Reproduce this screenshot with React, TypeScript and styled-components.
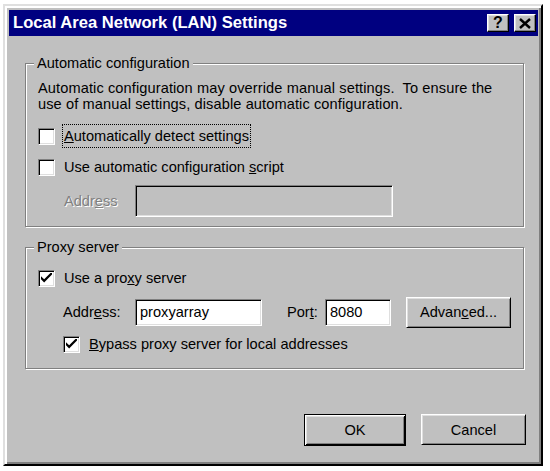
import React from 'react'
import styled, { createGlobalStyle } from 'styled-components'

const Global = createGlobalStyle`
  html, body {
    margin: 0;
    background: #ffffff;
  }
  body {
    font-family: "Liberation Sans", Arial, sans-serif;
    font-size: 14.6px;
    color: #000000;
  }
`

const Window = styled.div`
  box-sizing: border-box;
  width: 540px;
  height: 462px;
  margin: 4px 0 0 3px;
  padding: 4px 3px 4px 4px;
  background: #c0c0c0;
  border: 2px solid;
  border-color: #dfdfdf #000000 #000000 #dfdfdf;
  box-shadow: inset 2px 2px #ffffff, inset -2px -2px #808080;
  display: flex;
  flex-direction: column;
`

const TitleBar = styled.div`
  height: 26px;
  background: #000080;
  display: flex;
  align-items: center;
  padding: 0 2px 0 4px;
`

const Title = styled.div`
  flex: 1;
  color: #ffffff;
  font-weight: bold;
  font-size: 16.6px;
`

const TitleButton = styled.div`
  box-sizing: border-box;
  width: 22px;
  height: 18px;
  margin-left: 5px;
  background: #c0c0c0;
  border: 1px solid;
  border-color: #ffffff #000000 #000000 #ffffff;
  box-shadow: inset -1px -1px #808080, inset 1px 1px #dfdfdf;
  display: flex;
  align-items: center;
  justify-content: center;
  font-weight: bold;
  font-size: 16px;
  line-height: 1;
`

const Body = styled.div`
  flex: 1;
  display: flex;
  flex-direction: column;
  padding: 27px 14px 0 16px;
`

const Group = styled.div<{ $top: number; $pad: string }>`
  position: relative;
  margin-top: ${({ $top }) => $top}px;
  border: 1px solid #808080;
  box-shadow: 1px 1px 0 #ffffff, inset 1px 1px 0 #ffffff;
  padding: ${({ $pad }) => $pad};
  display: flex;
  flex-direction: column;
`

const Legend = styled.span`
  position: absolute;
  top: -9px;
  left: 8px;
  padding: 0 3px;
  background: #c0c0c0;
  line-height: 16px;
`

const Description = styled.p`
  margin: 0;
  line-height: 16px;
  letter-spacing: 0.1px;
`

const Row = styled.div<{ $indent?: number; $mt?: number; $h?: number }>`
  display: flex;
  align-items: center;
  height: ${({ $h }) => $h ?? 24}px;
  margin-top: ${({ $mt }) => $mt ?? 0}px;
  padding-left: ${({ $indent }) => $indent ?? 0}px;
`

const Box = styled.div`
  box-sizing: border-box;
  width: 17px;
  height: 17px;
  flex: none;
  background: #ffffff;
  border: 1px solid;
  border-color: #808080 #ffffff #ffffff #808080;
  box-shadow: inset 1px 1px #000000, inset -1px -1px #dfdfdf;
  display: flex;
  align-items: center;
  justify-content: center;
`

const Label = styled.span<{ $focus?: boolean }>`
  margin-left: 8px;
  padding: 3px 1px;
  outline: ${({ $focus }) => ($focus ? '1px dotted #000' : 'none')};
`

const FieldLabel = styled.span<{ $w: number; $disabled?: boolean; $ml?: number }>`
  width: ${({ $w }) => $w}px;
  margin-left: ${({ $ml }) => $ml ?? 0}px;
  flex: none;
  color: ${({ $disabled }) => ($disabled ? '#808080' : '#000')};
  text-shadow: ${({ $disabled }) => ($disabled ? '1px 1px 0 #ffffff' : 'none')};
`

const Input = styled.div<{ $w: number; $h: number; $disabled?: boolean }>`
  box-sizing: border-box;
  width: ${({ $w }) => $w}px;
  height: ${({ $h }) => $h}px;
  flex: none;
  background: ${({ $disabled }) => ($disabled ? '#c0c0c0' : '#ffffff')};
  border: 1px solid;
  border-color: #808080 #ffffff #ffffff #808080;
  box-shadow: inset 1px 1px #000000, inset -1px -1px #dfdfdf;
  padding-left: 4px;
  display: flex;
  align-items: center;
`

const Button = styled.div<{ $w: number; $default?: boolean; $ml?: number }>`
  box-sizing: border-box;
  width: ${({ $w }) => $w}px;
  height: ${({ $default }) => ($default ? 32 : 31)}px;
  margin-left: ${({ $ml }) => $ml ?? 0}px;
  flex: none;
  background: #c0c0c0;
  border: 1px solid;
  border-color: ${({ $default }) =>
    $default ? '#000000' : '#ffffff #000000 #000000 #ffffff'};
  box-shadow: ${({ $default }) =>
    $default
      ? 'inset 1px 1px #ffffff, inset -1px -1px #000000, inset 2px 2px #dfdfdf, inset -2px -2px #808080'
      : 'inset 1px 1px #dfdfdf, inset -1px -1px #808080'};
  display: flex;
  align-items: center;
  justify-content: center;
`

const Footer = styled.div`
  display: flex;
  justify-content: flex-end;
  margin-top: 45px;
  margin-right: -2px;
`

const Check = () => (
  <svg width="11" height="11" viewBox="0 0 7 7">
    <path d="M0 2 L0 4 L2 6 L7 1 L7 -1 L2 4 Z" fill="#000" />
  </svg>
)

const CloseGlyph = () => (
  <svg width="12" height="11" viewBox="0 0 12 11">
    <path d="M1 1 L11 10 M11 1 L1 10" stroke="#000" strokeWidth="2.4" />
  </svg>
)

const CheckBox: React.FC<{ checked?: boolean }> = ({ checked }) => (
  <Box>{checked && <Check />}</Box>
)

const App: React.FC = () => (
  <>
    <Global />
    <Window>
      <TitleBar>
        <Title>Local Area Network (LAN) Settings</Title>
        <TitleButton>?</TitleButton>
        <TitleButton>
          <CloseGlyph />
        </TitleButton>
      </TitleBar>
      <Body>
        <Group $top={0} $pad="16px 12px 9px 12px">
          <Legend>Automatic configuration</Legend>
          <Description>
            Automatic configuration may override manual settings.&nbsp; To ensure the
            <br />
            use of manual settings, disable automatic configuration.
          </Description>
          <Row $mt={12}>
            <CheckBox />
            <Label $focus>
              <u>A</u>utomatically detect settings
            </Label>
          </Row>
          <Row $mt={7}>
            <CheckBox />
            <Label>
              Use automatic configuration <u>s</u>cript
            </Label>
          </Row>
          <Row $mt={6} $h={32} $indent={26}>
            <FieldLabel $w={71} $disabled>
              Addr<u>e</u>ss
            </FieldLabel>
            <Input $w={258} $h={32} $disabled />
          </Row>
        </Group>
        <Group $top={20} $pad="18px 12px 12px 12px">
          <Legend>Proxy server</Legend>
          <Row>
            <CheckBox checked />
            <Label>
              Use a pro<u>x</u>y server
            </Label>
          </Row>
          <Row $mt={6} $h={32} $indent={25}>
            <FieldLabel $w={72}>
              Addr<u>e</u>ss:
            </FieldLabel>
            <Input $w={127} $h={27}>proxyarray</Input>
            <FieldLabel $w={38} $ml={25}>
              Por<u>t</u>:
            </FieldLabel>
            <Input $w={66} $h={27}>8080</Input>
            <Button $w={105} $ml={15}>
              Advan<u>c</u>ed...
            </Button>
          </Row>
          <Row $mt={4} $indent={25}>
            <CheckBox checked />
            <Label>
              <u>B</u>ypass proxy server for local addresses
            </Label>
          </Row>
        </Group>
        <Footer>
          <Button $w={102} $default>
            OK
          </Button>
          <Button $w={105} $ml={15}>
            Cancel
          </Button>
        </Footer>
      </Body>
    </Window>
  </>
)

export default App
